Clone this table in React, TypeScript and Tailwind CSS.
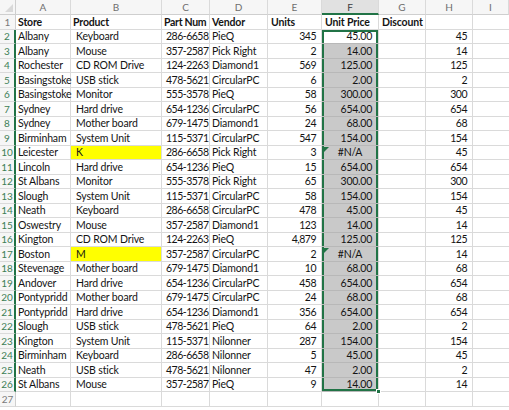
import type { ReactNode } from 'react'

type Row = {
  store: string
  product: string
  part: string
  vendor: string
  units: string
  price: string
  discount: string
  highlight?: boolean
}

const rows: Row[] = [
  { store: 'Albany', product: 'Keyboard', part: '286-6658', vendor: 'PieQ', units: '345', price: '45.00', discount: '45' },
  { store: 'Albany', product: 'Mouse', part: '357-2587', vendor: 'Pick Right', units: '2', price: '14.00', discount: '14' },
  { store: 'Rochester', product: 'CD ROM Drive', part: '124-2263', vendor: 'Diamond1', units: '569', price: '125.00', discount: '125' },
  { store: 'Basingstoke', product: 'USB stick', part: '478-5621', vendor: 'CircularPC', units: '6', price: '2.00', discount: '2' },
  { store: 'Basingstoke', product: 'Monitor', part: '555-3578', vendor: 'PieQ', units: '58', price: '300.00', discount: '300' },
  { store: 'Sydney', product: 'Hard drive', part: '654-1236', vendor: 'CircularPC', units: '56', price: '654.00', discount: '654' },
  { store: 'Sydney', product: 'Mother board', part: '679-1475', vendor: 'Diamond1', units: '24', price: '68.00', discount: '68' },
  { store: 'Birminham', product: 'System Unit', part: '115-5371', vendor: 'CircularPC', units: '547', price: '154.00', discount: '154' },
  { store: 'Leicester', product: 'K', part: '286-6658', vendor: 'Pick Right', units: '3', price: '#N/A', discount: '45', highlight: true },
  { store: 'Lincoln', product: 'Hard drive', part: '654-1236', vendor: 'PieQ', units: '15', price: '654.00', discount: '654' },
  { store: 'St Albans', product: 'Monitor', part: '555-3578', vendor: 'Pick Right', units: '65', price: '300.00', discount: '300' },
  { store: 'Slough', product: 'System Unit', part: '115-5371', vendor: 'CircularPC', units: '58', price: '154.00', discount: '154' },
  { store: 'Neath', product: 'Keyboard', part: '286-6658', vendor: 'CircularPC', units: '478', price: '45.00', discount: '45' },
  { store: 'Oswestry', product: 'Mouse', part: '357-2587', vendor: 'Diamond1', units: '123', price: '14.00', discount: '14' },
  { store: 'Kington', product: 'CD ROM Drive', part: '124-2263', vendor: 'PieQ', units: '4,879', price: '125.00', discount: '125' },
  { store: 'Boston', product: 'M', part: '357-2587', vendor: 'CircularPC', units: '2', price: '#N/A', discount: '14', highlight: true },
  { store: 'Stevenage', product: 'Mother board', part: '679-1475', vendor: 'Diamond1', units: '10', price: '68.00', discount: '68' },
  { store: 'Andover', product: 'Hard drive', part: '654-1236', vendor: 'CircularPC', units: '458', price: '654.00', discount: '654' },
  { store: 'Pontypridd', product: 'Mother board', part: '679-1475', vendor: 'CircularPC', units: '24', price: '68.00', discount: '68' },
  { store: 'Pontypridd', product: 'Hard drive', part: '654-1236', vendor: 'Diamond1', units: '356', price: '654.00', discount: '654' },
  { store: 'Slough', product: 'USB stick', part: '478-5621', vendor: 'PieQ', units: '64', price: '2.00', discount: '2' },
  { store: 'Kington', product: 'System Unit', part: '115-5371', vendor: 'Nilonner', units: '287', price: '154.00', discount: '154' },
  { store: 'Birminham', product: 'Keyboard', part: '286-6658', vendor: 'Nilonner', units: '5', price: '45.00', discount: '45' },
  { store: 'Neath', product: 'USB stick', part: '478-5621', vendor: 'Nilonner', units: '47', price: '2.00', discount: '2' },
  { store: 'St Albans', product: 'Mouse', part: '357-2587', vendor: 'PieQ', units: '9', price: '14.00', discount: '14' },
]

const letters = ['A', 'B', 'C', 'D', 'E', 'F', 'G', 'H', 'I']

const grid =
  'grid grid-cols-[16px_55px_91px_48px_58px_54px_57px_47px_47px_1fr]'

// the sheet's digits are narrow (Calibri), Lato's are wide: tighten them
const num = 'tracking-[-0.5px]'

function Cell({
  children,
  className = '',
}: {
  children?: ReactNode
  className?: string
}) {
  return (
    <div
      className={`relative flex h-[14.5px] items-center border-r border-b border-[#dadada] px-[2px] whitespace-nowrap ${className}`}
    >
      {children}
    </div>
  )
}

function RowNum({ n, selected }: { n: number; selected?: boolean }) {
  return (
    <div
      className={`flex h-[14.5px] items-center justify-center border-b border-[#dadada] bg-[#f6f6f6] text-[10px] tracking-normal ${
        selected
          ? 'border-r-2 border-r-[#217346] text-[#3d7f57]'
          : 'border-r border-r-[#cfcfcf] text-[#7a7a7a]'
      }`}
    >
      {n}
    </div>
  )
}

function PriceCell({ value, first, last }: { value: string; first: boolean; last: boolean }) {
  const isError = value === '#N/A'
  const edge = first
    ? 'shadow-[inset_2px_0_0_#217346,inset_-2px_0_0_#217346,inset_0_2px_0_#217346] bg-white'
    : last
      ? 'shadow-[inset_2px_0_0_#217346,inset_-2px_0_0_#217346,inset_0_-2px_0_#217346] bg-[#c9c9c9]'
      : 'shadow-[inset_2px_0_0_#217346,inset_-2px_0_0_#217346] bg-[#c9c9c9]'

  return (
    <Cell
      className={`${edge} tracking-[-0.25px] border-b-[#b8b8b8] ${isError ? 'justify-center' : 'justify-end pr-[6px]'}`}
    >
      {isError && (
        <span className="absolute top-[1px] left-[2px] h-0 w-0 border-t-[5px] border-r-[5px] border-t-[#217346] border-r-transparent" />
      )}
      {value}
      {last && (
        <span className="absolute -right-[3px] -bottom-[3px] z-10 h-[5px] w-[5px] border border-white bg-[#217346]" />
      )}
    </Cell>
  )
}

export default function App() {
  return (
    <div className="h-[410px] w-[509px] overflow-hidden bg-white font-['Lato','Liberation_Sans',sans-serif] text-[10.5px] leading-none tracking-[-0.15px] text-[#141414]">
      <div className={`${grid} h-[15px]`}>
        <div className="relative border-r border-b border-[#cfcfcf] bg-[#f6f6f6]">
          <span className="absolute right-[2px] bottom-[2px] h-0 w-0 border-b-[8px] border-l-[8px] border-b-[#d9d9d9] border-l-transparent" />
        </div>
        {letters.map((l) => (
          <div
            key={l}
            className={`flex items-center justify-center border-r border-[#dadada] text-[10px] tracking-normal ${
              l === 'F'
                ? 'border-b-2 border-b-[#217346] bg-[#e1e1e1] text-[#3c3c3c]'
                : 'border-b border-b-[#cfcfcf] bg-[#f6f6f6] text-[#6e6e6e]'
            }`}
          >
            {l}
          </div>
        ))}
      </div>

      <div className={grid}>
        <RowNum n={1} />
        <Cell className="font-bold">Store</Cell>
        <Cell className="font-bold">Product</Cell>
        <Cell className="font-bold tracking-[-0.3px]">Part Num</Cell>
        <Cell className="font-bold">Vendor</Cell>
        <Cell className="pl-[3px] font-bold">Units</Cell>
        <Cell className="pl-[3px] font-bold">Unit Price</Cell>
        <Cell className="pl-[3px] font-bold">Discount</Cell>
        <Cell />
        <Cell className="border-r-0" />

        {rows.map((r, i) => (
          <div key={i} className="contents">
            <RowNum n={i + 2} selected />
            <Cell>{r.store}</Cell>
            <Cell className={`pl-[5px] ${r.highlight ? 'bg-[#ffff00]' : ''}`}>{r.product}</Cell>
            <Cell className={`${num} pl-[4px]`}>{r.part}</Cell>
            <Cell>{r.vendor}</Cell>
            <Cell className={`${num} justify-end pr-[5px]`}>{r.units}</Cell>
            <PriceCell value={r.price} first={i === 0} last={i === rows.length - 1} />
            <Cell />
            <Cell className={`${num} justify-end pr-[5px]`}>{r.discount}</Cell>
            <Cell className="border-r-0" />
          </div>
        ))}

        <RowNum n={27} />
        {letters.map((l) => (
          <Cell key={l} className={l === 'I' ? 'border-r-0' : ''} />
        ))}
      </div>
    </div>
  )
}
